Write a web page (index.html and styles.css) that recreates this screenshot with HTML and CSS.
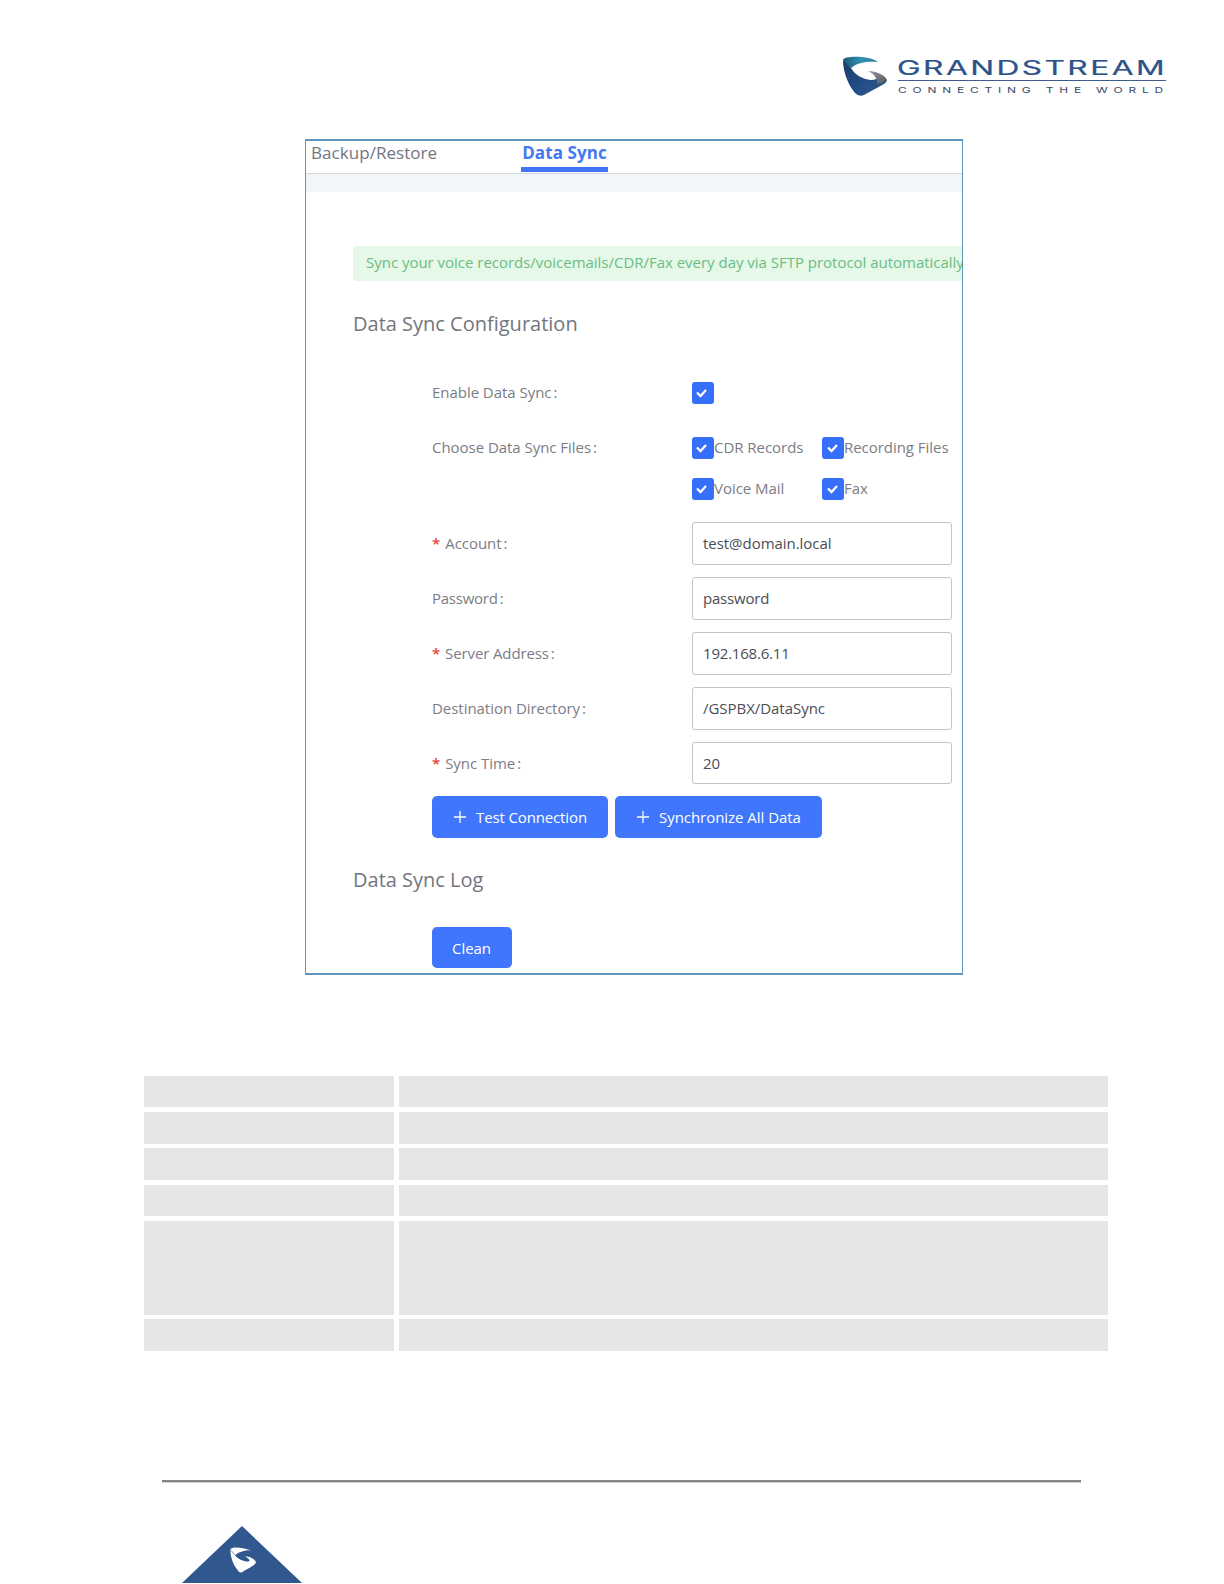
FILE: index.html
```html
<!DOCTYPE html>
<html lang="en">
<head>
<meta charset="utf-8">
<title>Data Sync Configuration</title>
<link rel="stylesheet" href="styles.css">
</head>
<body>
<div class="page">
  <header class="brand">
    <svg class="brand-logo" width="326" height="42" viewBox="0 0 326 42" role="img" aria-label="Grandstream">
      <defs>
        <linearGradient id="teal" x1="0" y1="0" x2="1" y2="0"><stop offset="0" stop-color="#1f5777"/><stop offset=".5" stop-color="#2f8fac"/><stop offset="1" stop-color="#2a7f9f"/></linearGradient>
        <linearGradient id="navy" x1="0" y1="0" x2="1" y2="1"><stop offset="0" stop-color="#1c3c66"/><stop offset=".6" stop-color="#234f8a"/><stop offset="1" stop-color="#3a5878"/></linearGradient>
        <linearGradient id="steel" x1="0" y1="0" x2="1" y2="1"><stop offset="0" stop-color="#999da0"/><stop offset="1" stop-color="#4c545c"/></linearGradient>
      </defs>
      <path fill="url(#navy)" d="M1 5C5 8 7 10 9 13C13 20 20 24 29 25C33 25 35 24 35 22L45 25Q45 27 42 29L22 40Q17 42 13 38C7 31 1 18 1 5Z"/>
      <path fill="url(#teal)" d="M1 5C1 2 12 1 20 2C27 3 32 4 36 7C26 6 16 7 9 13C6 11 4 8 1 5Z"/>
      <path fill="url(#steel)" d="M26 16C34 16 43 20 45 25Q41 28 35 29C36 25 33 19 26 16Z"/>
      <g font-family="Inter, sans-serif">
        <text class="brand-name" x="55" y="20.2" textLength="270" lengthAdjust="spacingAndGlyphs">GRANDSTREAM</text>
        <text class="brand-tagline" x="56" y="37.700" textLength="271" lengthAdjust="spacingAndGlyphs">CONNECTING THE WORLD</text>
      </g>
      <path class="brand-rule" d="M56 25.500H324"/>
    </svg>
  </header>

  <main class="frame">
    <nav class="tabs">
      <a class="tab">Backup/Restore</a>
      <a class="tab tab-active">Data Sync</a>
    </nav>
    <div class="band"></div>
    <div class="alert">Sync your voice records/voicemails/CDR/Fax every day via SFTP protocol automatically</div>
    <h2 class="heading">Data Sync Configuration</h2>
    <div class="form">
      <div class="row">
        <span class="label">Enable Data Sync<i>:</i></span>
        <span class="check"><svg viewBox="0 0 22 22"><path d="M5 10.5L8.5 14L14 8"/></svg></span>
      </div>
      <div class="row">
        <span class="label">Choose Data Sync Files<i>:</i></span>
        <span class="option"><span class="check"><svg viewBox="0 0 22 22"><path d="M5 10.5L8.5 14L14 8"/></svg></span><span class="option-text">CDR Records</span></span>
        <span class="option"><span class="check"><svg viewBox="0 0 22 22"><path d="M6 10.5L9.5 14L15 8"/></svg></span><span class="option-text">Recording Files</span></span>
      </div>
      <div class="row row-short">
        <span class="label"></span>
        <span class="option"><span class="check"><svg viewBox="0 0 22 22"><path d="M5 10.5L8.5 14L14 8"/></svg></span><span class="option-text">Voice Mail</span></span>
        <span class="option"><span class="check"><svg viewBox="0 0 22 22"><path d="M6 10.5L9.5 14L15 8"/></svg></span><span class="option-text">Fax</span></span>
      </div>
      <div class="row row-first-input">
        <span class="label"><b>*</b>Account<i>:</i></span>
        <span class="input">test@domain.local</span>
      </div>
      <div class="row">
        <span class="label label-tight">Password<i>:</i></span>
        <span class="input input-tight">password</span>
      </div>
      <div class="row">
        <span class="label label-server"><b>*</b>Server Address<i>:</i></span>
        <span class="input input-tight">192.168.6.11</span>
      </div>
      <div class="row">
        <span class="label">Destination Directory<i>:</i></span>
        <span class="input">/GSPBX/DataSync</span>
      </div>
      <div class="row row-last">
        <span class="label"><b>*</b>Sync Time<i>:</i></span>
        <span class="input">20</span>
      </div>
    </div>
    <div class="actions">
      <span class="button button-test"><svg class="plus" viewBox="0 0 14 14"><path d="M7 1V13M1 7H13"/></svg>Test Connection</span>
      <span class="button button-sync"><svg class="plus" viewBox="0 0 14 14"><path d="M7 1V13M1 7H13"/></svg>Synchronize All Data</span>
    </div>
    <h2 class="heading heading-log">Data Sync Log</h2>
    <div class="actions actions-log">
      <span class="button button-clean">Clean</span>
    </div>
  </main>

  <div class="grid">
    <div></div><div></div>
    <div class="low"></div><div class="low"></div>
    <div></div><div></div>
    <div class="low"></div><div class="low"></div>
    <div class="low"></div><div class="low"></div>
    <div></div><div></div>
  </div>

  <footer class="footer">
    <div class="footer-rule"></div>
    <svg class="footer-mark" width="120" height="57" viewBox="0 0 120 57">
      <path fill="#30588f" d="M60 0L120 57H0Z"/>
      <g transform="translate(0 -.7)">
        <path fill="#fff" d="M48.500 24C50 21 60 22 69 25C62 25 56 27 53 30C57 35 64 37 67 36C69 35 66 33 63 31C68 31 73 34 74 37C73 40 68 42 60 47Q57 48 55 44C51 39 48 31 48.500 24Z"/>
        <path fill="none" stroke="#30588f" stroke-width=".6" d="M49 25L53 30"/>
      </g>
    </svg>
  </footer>
</div>
</body>
</html>
```
FILE: styles.css
```css
* { box-sizing: border-box; }

body {
  margin: 0;
  background: #fff;
  font: 15px/20px "Open Sans", sans-serif;
  letter-spacing: -0.04px;
  color: #7b7d85;
}

.page {
  display: flex;
  flex-direction: column;
  height: 1584px;
  overflow: hidden;
}

.brand {
  display: flex;
  justify-content: flex-end;
  height: 139px;
  padding: 55px 56px 0 0;
}

.brand-name {
  font-size: 19.5px;
  font-weight: 400;
  letter-spacing: 1.5px;
  fill: #2c5288;
  stroke: #2c5288;
  stroke-width: .2px;
}

.brand-tagline {
  font-size: 8.2px;
  letter-spacing: 4px;
  fill: #39496b;
}

.brand-rule { stroke: #3b5c8d; stroke-width: 1.2; }

.frame {
  display: flex;
  flex-direction: column;
  width: 658px;
  height: 836px;
  margin-left: 305px;
  border: 1px solid #6095bd;
  border-width: 2px 1px;
  overflow: hidden;
}

.tabs {
  display: flex;
  flex: none;
  gap: 84px;
  height: 33px;
  padding-left: 5px;
  border-bottom: 1px solid #d3d9dc;
  font-size: 17px;
  line-height: 24px;
  letter-spacing: .05px;
  color: #73757f;
}

.tab-active {
  height: 31px;
  padding: 0 1px;
  border-bottom: 5px solid #4075f5;
  font-weight: 700;
  letter-spacing: .1px;
  color: #4478f2;
}

.band { flex: none; height: 18px; background: #f3f6f9; }

.alert {
  flex: none;
  height: 35px;
  margin: 54px 0 0 47px;
  padding-left: 13px;
  border-radius: 4px 0 0 4px;
  background: #e6f8e8;
  color: #6bbd83;
  line-height: 32px;
  letter-spacing: -0.02px;
  white-space: nowrap;
}

.heading {
  flex: none;
  margin: 28px 0 26px 47px;
  font-size: 20px;
  font-weight: 400;
  line-height: 30px;
  letter-spacing: 0;
  color: #73757e;
}

.form { flex: none; padding-left: 126px; }

.row { display: flex; align-items: center; height: 55px; }
.row-short { height: 28px; }
.row-first-input { margin-top: 13px; }
.row-last { height: 54px; }
.row-last .input { height: 42px; line-height: 40px; }

.label { width: 260px; padding-bottom: 1px; }
.label i { margin-left: 2px; font-style: normal; }
.label b { margin-right: 5px; font-weight: 600; color: #e5403c; }
.label-tight { letter-spacing: -0.25px; }
.label-server { letter-spacing: -0.12px; }

.option { display: flex; align-items: center; width: 130px; white-space: nowrap; }
.option-text { padding-bottom: 2px; }

.check {
  width: 22px;
  height: 22px;
  border-radius: 3px;
  background: #366ffc;
}
.check svg { display: block; }
.check path { fill: none; stroke: #fff; stroke-width: 2.3; }

.input {
  width: 260px;
  height: 43px;
  padding-left: 10px;
  border: 1px solid #c0c4cb;
  border-radius: 3px;
  color: #4b4d54;
  line-height: 41px;
}
.input-tight { letter-spacing: -0.2px; }

.actions { display: flex; flex: none; gap: 7px; margin: 6px 0 0 126px; }

.button {
  display: flex;
  align-items: center;
  height: 42px;
  padding-left: 21px;
  border-radius: 5px;
  background: #3f76fc;
  color: #fff;
}
.button-test { width: 176px; letter-spacing: -0.13px; }
.button-sync { width: 207px; }
.button-clean { width: 80px; height: 41px; padding-left: 20px; }

.plus { width: 14px; height: 14px; margin-right: 9px; }
.plus path { fill: none; stroke: #fff; stroke-width: 1.3; }

.heading-log { margin: 27px 0 0 47px; }
.actions-log { margin-top: 32px; }

.grid {
  display: grid;
  grid-template-columns: 250px 709px;
  grid-template-rows: 31px 33px 32px 32px 95px 32px;
  gap: 4px 5px;
  margin: 101px 0 0 144px;
}
.grid div { background: #e6e6e6; }
.grid .low { margin-top: 1px; }

.footer { padding: 129px 0 0 162px; }
.footer-rule {
  width: 919px;
  height: 3px;
  border-top: 2px solid #858585;
  border-bottom: 1px solid #d2d2d2;
}
.footer-mark { display: block; margin: 43px 0 0 20px; }
```
